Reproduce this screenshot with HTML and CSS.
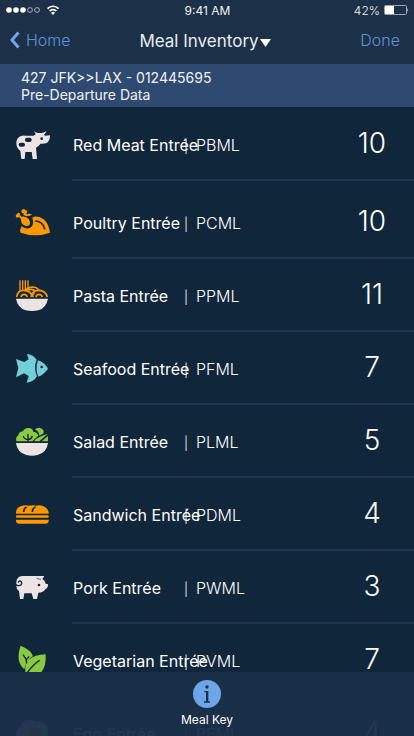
FILE: index.html
```html
<!DOCTYPE html>
<html lang="en">
<head>
<meta charset="utf-8">
<meta name="viewport" content="width=device-width, initial-scale=1">
<title>Meal Inventory</title>
<link rel="stylesheet" href="styles.css">
</head>
<body>
<div class="app">
  <header class="top">
    <div class="status">
      <span class="signal">
        <svg width="54" height="12" viewBox="0 0 54 12" aria-hidden="true">
          <g fill="#fff"><circle cx="3" cy="6" r="2.8"/><circle cx="10" cy="6" r="2.8"/><circle cx="17" cy="6" r="2.8"/></g>
          <g fill="none" stroke="#c5ced6" stroke-width=".8"><circle cx="24" cy="6" r="2.4"/><circle cx="31" cy="6" r="2.4"/></g>
          <g fill="none" stroke="#fff" stroke-width="1.7"><path d="M41.500 4.600a7.600 7.600 0 0 1 11 0"/><path d="M43.600 7a4.800 4.800 0 0 1 6.800 0"/></g>
          <path fill="#fff" d="M45 8.700a2.900 2.900 0 0 1 4 0L47 11z"/>
        </svg>
      </span>
      <span class="time">9:41 AM</span>
      <span class="battery">42%
        <svg width="25" height="10" viewBox="0 0 25 10" aria-hidden="true">
          <rect x=".5" y=".5" width="22" height="9" rx="1" fill="none" stroke="#9aa8b3"/>
          <path fill="#fff" d="M1 1h9v8H1z"/><path fill="#fff" d="M23.500 3q1.500 2 0 4z"/>
        </svg>
      </span>
    </div>
    <nav class="nav">
      <a class="link back" href="#home">
        <svg width="10" height="18" viewBox="0 0 10 18" aria-hidden="true"><path d="M8.500 1.500 2 9l6.500 7.500" fill="none" stroke="#6ea5e8" stroke-width="3"/></svg>
        Home</a>
      <button class="title" type="button">Meal Inventory<svg width="11" height="8" viewBox="0 0 11 8" aria-hidden="true"><path fill="#fff" d="M0 0h11L5.500 8z"/></svg></button>
      <a class="link done" href="#done">Done</a>
    </nav>
  </header>

  <section class="flight">
    <p>427 JFK&gt;&gt;LAX - 012445695</p>
    <p>Pre-Departure Data</p>
  </section>

  <ul class="meals">
    <li class="meal">
      <svg class="icon" viewBox="42 45 114 120" aria-hidden="true">
        <path fill="#ece4e4" d="M49 97q1-14 14-19 5-2 13-1h25q5-3 6-4l-5-10q5 6 12 6h10q8 0 15-6-2 8-7 11l3 3 15-1q0 17-10 23-7 3-18 2-7 8-14 12l3 34H98l-3-21H76l-2 21H64l-3-24q-13-9-12-26z"/>
        <g fill="#10263b"><rect x="75" y="83" width="20" height="13" rx="6"/><rect x="56" y="98" width="19" height="12" rx="6"/><circle cx="125" cy="86" r="4"/></g>
      </svg>
      <div class="info"><span class="name">Red Meat Entrée</span><span class="sep">|</span><span class="code">PBML</span><span class="count">10</span></div>
    </li>
    <li class="meal roomy">
      <svg class="icon" viewBox="42 39 114 120" aria-hidden="true">
        <path fill="#ff9800" d="M61 118q2-5 4-9 16 12 29 2 9-10 3-28 6-5 16-3 31 5 37 48-44 16-88 0-3-5-1-10z"/>
        <path d="M108 93q20 2 26 23" fill="none" stroke="#10263b" stroke-width="5" stroke-linecap="round"/>
        <path fill="#ff9800" d="M64 65q0-6 6-8 5 0 6 4 5-2 6 3-1 5-4 6l4 3q5-3 14 0l-7 5q-5-2-10 1l-9-5 1-4q-6 0-7-5z"/>
        <path fill="#ff9800" d="M47 78q0-5 5-6-1-4 4-4 5 1 4 7l4 5q14-3 22 7 8 13 1 19-10 5-19-3-6-7-5-16l-6-6q-9 5-10-3z"/>
      </svg>
      <div class="info"><span class="name">Poultry Entrée</span><span class="sep">|</span><span class="code">PCML</span><span class="count">10</span></div>
    </li>
    <li class="meal">
      <svg class="icon" viewBox="42 33 114 120" aria-hidden="true">
        <path fill="#ece4e4" d="M48 101h96q-5 27-29 35-19 4-38 0-24-8-29-35z"/>
        <g fill="none" stroke="#ff9800" stroke-width="5"><path d="M50 96q3-20 20-20 20-1 30 20M93 96q4-20 24-20 20 1 25 20M76 76q5-8 20-10 14 0 20 8M80 76q15-7 27 2M63 96q2-8 9-8t10 8M108 96q2-8 9-8t10 8"/><path stroke-width="4" d="M60 46v31M68 46v28M76 46v28M84 46v24"/></g>
        <path fill="#ff9800" d="m87 82 10 13 10-13-10 3z"/>
      </svg>
      <div class="info"><span class="name">Pasta Entrée</span><span class="sep">|</span><span class="code">PPML</span><span class="count">11</span></div>
    </li>
    <li class="meal">
      <svg class="icon" viewBox="42 27 114 120" aria-hidden="true">
        <path fill="#72ced8" d="m48 57 25 9 13-8-5-16q17 1 29 17-10 24 1 50-10 17-31 19l6-20-14-8-24 12 7-28z"/>
        <path fill="#72ced8" d="M114 61q19 5 30 25-12 17-29 24-10-23-1-49z"/><circle cx="125" cy="81" r="4" fill="#10263b"/>
      </svg>
      <div class="info"><span class="name">Seafood Entrée</span><span class="sep">|</span><span class="code">PFML</span><span class="count">7</span></div>
    </li>
    <li class="meal">
      <svg class="icon" viewBox="42 246 114 120" aria-hidden="true">
        <path fill="#ece4e4" d="M48 309h96q-3 28-31 36-17 4-34 0-28-8-31-36z"/>
        <path fill="#8ac940" d="M49 304q-3-13 6-18 1-10 13-12 7-11 18-10 12 1 14 11 13 2 15 12l-18 17z"/>
        <path fill="#8ac940" d="M104 268q13-10 24 0 6 7 3 12l-13 7q-1-14-14-19zM102 304q9-14 41-22l-25 22zM125 304l19-16v16z"/>
        <path d="M84 305v-23M70 288q1 9 14 11M97 288q-2 9-13 11" fill="none" stroke="#10263b" stroke-width="4"/>
      </svg>
      <div class="info"><span class="name">Salad Entrée</span><span class="sep">|</span><span class="code">PLML</span><span class="count">5</span></div>
    </li>
    <li class="meal">
      <svg class="icon" viewBox="42 15 114 120" aria-hidden="true">
        <g fill="#ff9800"><path d="M48 71q-1-18 14-22 14-6 26-2 12-3 20 0 20-4 31 7 8 9 7 17z"/><rect x="48" y="76" width="98" height="7" rx="3"/><path d="M48 89h98q1 12-10 12H58q-11 0-10-12z"/></g>
        <path d="M71 66q0-12 9-15M97 66q0-12 10-15" fill="none" stroke="#10263b" stroke-width="5"/>
      </svg>
      <div class="info"><span class="name">Sandwich Entrée</span><span class="sep">|</span><span class="code">PDML</span><span class="count">4</span></div>
    </li>
    <li class="meal">
      <svg class="icon" viewBox="42 234 114 120" aria-hidden="true">
        <path fill="#ece4e4" d="M49 277q1-18 18-19h66l-6 9q8 4 10 14l7 2q1 10-7 14-7 11-22 11l-4 19h-11l-5-17H73l-3 17H60l-3-23q-8-5-8-16z"/>
        <path d="M48 285q16 5 17-5 0-8-7-7-4 2-2 5" fill="none" stroke="#10263b" stroke-width="4"/><path d="M110 264q5 4 13 4" fill="none" stroke="#10263b" stroke-width="2"/><circle cx="117" cy="285" r="4" fill="#10263b"/>
      </svg>
      <div class="info"><span class="name">Pork Entrée</span><span class="sep">|</span><span class="code">PWML</span><span class="count">3</span></div>
    </li>
    <li class="meal">
      <svg class="icon" viewBox="42 33 114 120" aria-hidden="true">
        <path fill="#8ac940" d="M62 47q31 13 37 31-21 12-26 40-28-24-11-71zM137 73q2 36-13 53H76q-3-25 13-39 14-12 48-14z"/>
        <path d="m69 74 9 13 2 14M88 79l-9 10M119 91q-16 9-37 36" fill="none" stroke="#10263b" stroke-width="4"/>
      </svg>
      <div class="info"><span class="name">Vegetarian Entrée</span><span class="sep">|</span><span class="code">PVML</span><span class="count">7</span></div>
    </li>
    <li class="meal">
      <svg class="icon" viewBox="42 252 114 120" aria-hidden="true">
        <path fill="#ece4e4" d="M48 310q0-13 13-20 7-19 25-20 14 0 22 5 18-4 28 6 9 9 8 28-2 45-45 45-45-2-51-44z"/><circle cx="104" cy="310" r="18" fill="#ff9800"/>
      </svg>
      <div class="info"><span class="name">Egg Entrée</span><span class="sep">|</span><span class="code">PEML</span><span class="count">4</span></div>
    </li>
  </ul>

  <footer class="tabbar">
    <button class="key" type="button">
      <svg width="28" height="28" viewBox="0 0 84 84" aria-hidden="true"><circle cx="42" cy="42" r="42" fill="#6ea5e8"/><g fill="#1a3048"><circle cx="42" cy="21" r="5"/><path d="M34 33h12v31h5v4H33v-4h6V37h-5z"/></g></svg>
      Meal Key
    </button>
  </footer>
</div>
</body>
</html>
```
FILE: styles.css
```css
* { box-sizing: border-box; }
body { margin: 0; background: #10263b; color: #fff; font-family: Inter, "Liberation Sans", sans-serif; }
button { border: 0; padding: 0; background: none; color: inherit; font: inherit; cursor: pointer; }
a { color: inherit; text-decoration: none; }
svg { display: block; flex: none; }

.app { position: relative; display: flex; flex-direction: column; height: 100vh; overflow: hidden; }

.top { background: #1c3147; }
.status { display: grid; grid-template-columns: 1fr auto 1fr; align-items: center; height: 20px; padding: 0 5px 0 6px; font-size: 12px; color: #f0f3f6; }
.battery { display: flex; justify-content: flex-end; align-items: center; gap: 4px; font-weight: 300; }
.nav { display: grid; grid-template-columns: 1fr auto 1fr; align-items: center; height: 44px; padding: 0 14px 4px 10px; font-size: 16px; }
.link { color: #5c93d9; font-weight: 300; }
.back { display: flex; align-items: center; gap: 6px; }
.done { text-align: right; }
.title { display: flex; align-items: center; gap: 1px; padding-top: 2px; font-size: 17px; color: #e8edf2; }
.title svg { margin-top: 4px; }

.flight { padding: 5px 21px 4px; background: #2f4a70; font-size: 14px; line-height: 17px; color: #f0f3f6; }
.flight p { margin: 0; }

.meals { flex: 1; min-height: 0; margin: 0; padding: 0; list-style: none; overflow: hidden; }
.meal { display: grid; grid-template-columns: 72px 1fr; align-items: center; height: 73px; }
.meal:first-child { height: 74px; padding-top: 1px; }
.roomy { height: 78px; padding-top: 5px; }
.icon { width: 38px; height: 40px; margin-left: 14px; }
.info { display: grid; grid-template-columns: 111px 12px 1fr 84px; align-items: center; height: 100%; padding-left: 1px; padding-top: 2px; border-bottom: 2px solid #20344b; white-space: nowrap; font-size: 16px; }
.sep, .code { font-weight: 300; }
.sep { padding-top: 2px; font-size: 13px; }
.count { padding-bottom: 4px; font-size: 28px; font-weight: 300; text-align: center; }

.tabbar { position: absolute; right: 0; bottom: 0; left: 0; display: flex; justify-content: center; padding: 8px 0; height: 64px; background: rgba(26, 48, 73, 0.96); }
.key { display: flex; flex-direction: column; align-items: center; gap: 4px; font-size: 12px; line-height: 16px; }
```
